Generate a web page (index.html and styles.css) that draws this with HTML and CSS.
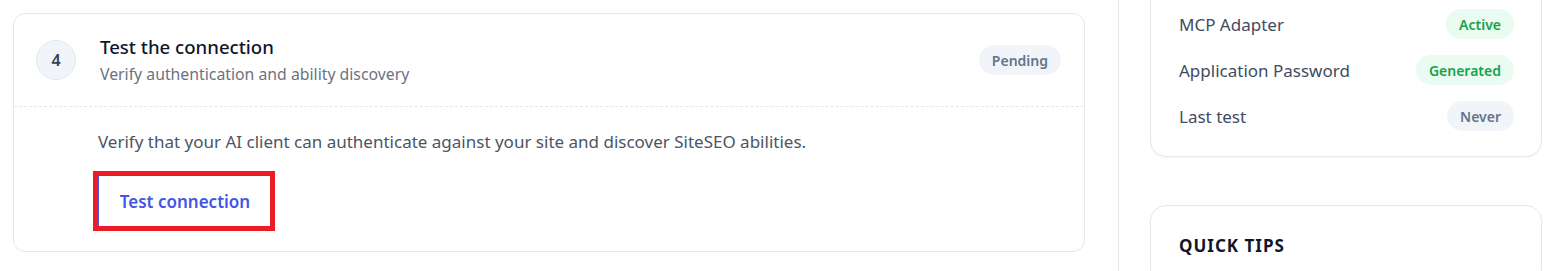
FILE: index.html
```html
<!DOCTYPE html>
<html lang="en">
<head>
<meta charset="utf-8">
<title>MCP setup</title>
<link rel="stylesheet" href="styles.css">
</head>
<body>
<div class="page">
  <main class="main">
    <section class="step">
      <header class="step-head">
        <div class="step-num">4</div>
        <div class="step-titles">
          <h2 class="step-title">Test the connection</h2>
          <p class="step-sub">Verify authentication and ability discovery</p>
        </div>
        <span class="badge badge-gray">Pending</span>
      </header>
      <div class="step-body">
        <p class="step-text">Verify that your AI client can authenticate against your site and discover SiteSEO abilities.</p>
        <button class="btn-link" type="button">Test connection</button>
      </div>
    </section>
  </main>
  <aside class="side">
    <div class="card card-status">
      <div class="status-row"><span class="status-label">MCP Adapter</span><span class="badge badge-green">Active</span></div>
      <div class="status-row"><span class="status-label">Application Password</span><span class="badge badge-green">Generated</span></div>
      <div class="status-row"><span class="status-label">Last test</span><span class="badge badge-gray">Never</span></div>
    </div>
    <div class="card card-tips">
      <h3 class="tips-title">QUICK TIPS</h3>
      <div class="tips-rule"></div>
    </div>
  </aside>
</div>
</body>
</html>
```
FILE: styles.css
```css
* { box-sizing: border-box; }
html, body { margin: 0; padding: 0; background: #ffffff; }
body {
  font-family: "Noto Sans", "Open Sans", "Liberation Sans", sans-serif;
  color: #334155;
  overflow: hidden;
  height: 271px;
}
.page {
  display: flex;
  align-items: flex-start;
  height: 271px;
  overflow: hidden;
}
.main {
  width: 1118px;
  padding: 13px 33px 0 13px;
  flex: none;
}
.step {
  border: 1px solid #e5e7eb;
  border-radius: 12px;
  background: #fff;
}
.step-head {
  display: flex;
  align-items: center;
  height: 93px;
  padding: 0 23px 0 22px;
  border-bottom: 1px dashed #e5e7eb;
}
.step-num {
  width: 40px;
  height: 40px;
  border-radius: 50%;
  background: #f1f5f9;
  border: 1px solid #e2e8f0;
  display: flex;
  align-items: center;
  justify-content: center;
  font-size: 16px;
  font-weight: 600;
  color: #334155;
  flex: none;
}
.step-titles {
  flex: 1;
  margin-left: 24px;
  padding-bottom: 1px;
}
.step-title {
  margin: 0;
  font-size: 18.6px;
  line-height: 26px;
  font-weight: 500;
  color: #0f172a;
}
.step-sub {
  margin: 3px 0 0;
  font-size: 15.8px;
  line-height: 22px;
  color: #6b7280;
}
.badge {
  display: inline-flex;
  align-items: center;
  height: 30px;
  padding: 0 13px;
  border-radius: 15px;
  font-size: 14px;
  font-weight: 600;
  flex: none;
}
.badge-gray { background: #f1f5f9; color: #64748b; }
.badge-green { background: #eafbf1; color: #16a34a; }
.step-body {
  padding: 23px 24px 25px 84px;
}
.step-text {
  margin: 0;
  font-size: 17px;
  line-height: 24px;
  color: #4b5563;
}
.btn-link {
  margin-top: 22px;
  display: block;
  width: 172px;
  height: 50px;
  padding: 0 0 0 1px;
  background: #fff;
  border: none;
  border-left: 1px solid #4356e6;
  outline: 5px solid #ed1c24;
  font-family: inherit;
  font-size: 17px;
  font-weight: 600;
  color: #4356e6;
  cursor: pointer;
}
.side {
  flex: 1;
  align-self: stretch;
  border-left: 1px solid #e5e7eb;
  padding: 0 13px 0 31px;
  overflow: hidden;
}
.card {
  border: 1px solid #e5e7eb;
  border-radius: 16px;
  background: #fff;
}
.card-status {
  margin-top: -40px;
  padding: 48px 27px 25px 28px;
  display: flex;
  flex-direction: column;
  gap: 16px;
  box-shadow: 0 1px 2px rgba(15, 23, 42, 0.04);
}
.status-row {
  display: flex;
  align-items: center;
  justify-content: space-between;
  height: 30px;
}
.status-label {
  font-size: 17px;
  color: #3f4b5f;
}
.card-tips {
  margin-top: 48px;
  padding: 27px 27px 0 28px;
  height: 80px;
}
.tips-title {
  margin: 0;
  font-size: 17px;
  line-height: 26px;
  font-weight: 700;
  letter-spacing: 1px;
  color: #0f172a;
}
.tips-rule {
  margin-top: 12px;
  height: 1px;
  background: #e5e7eb;
}
```
